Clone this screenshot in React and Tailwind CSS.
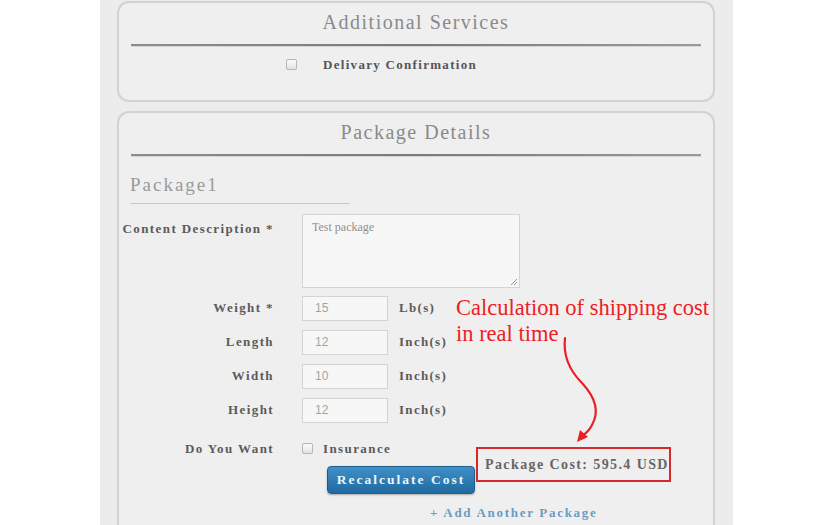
import React from "react";

const serif = { fontFamily: '"Liberation Serif", "DejaVu Serif", serif' };

function Divider() {
  return (
    <div className="mx-3 h-[2px] bg-gradient-to-r from-[#8d8d8d] via-[#7a7a7a] to-[#9a9a9a] shadow-[0_1px_0_#d6d6d6]" />
  );
}

function Card({ title, children, className = "" }) {
  return (
    <div
      className={`shrink-0 rounded-[12px] border-2 border-[#d2d2d2] bg-[#efefef] ${className}`}
    >
      <div className="flex h-[41px] items-center justify-center pb-[3px] text-[20px] tracking-[1.5px] text-[#8a8a8a]">
        {title}
      </div>
      <Divider />
      {children}
    </div>
  );
}

function Checkbox() {
  return (
    <span className="inline-block h-[11px] w-[11px] shrink-0 rounded-[2px] border border-[#b5b5b5] bg-gradient-to-b from-[#fbfbfb] to-[#e2e2e2]" />
  );
}

function NumberRow({ label, value, unit }) {
  return (
    <div className="flex h-[25px] items-center">
      <div className="w-[157px] pr-[2px] text-right text-[13px] font-bold tracking-[1.4px] text-[#5b5b5b]">
        {label}
      </div>
      <div
        className="ml-[26px] flex h-[25px] w-[86px] items-center border border-[#d4d4d4] bg-[#f7f7f7] pl-[12px] text-[12px] text-[#a3a3a3]"
        style={{ fontFamily: '"Liberation Sans", Arial, sans-serif' }}
      >
        {value}
      </div>
      <div className="ml-[11px] text-[13px] font-bold tracking-[1.3px] text-[#5b5b5b]">
        {unit}
      </div>
    </div>
  );
}

export default function App() {
  return (
    <div className="relative h-[525px] w-[825px] overflow-hidden bg-white" style={serif}>
      <div className="ml-[100px] flex h-full w-[633px] flex-col bg-[#ececec] pl-[17px] pr-[18px] pt-[1px]">
        <Card title="Additional Services" className="h-[101px]">
          <div className="mt-[9px] flex items-center pl-[167px]">
            <Checkbox />
            <span className="ml-[26px] text-[13px] font-bold tracking-[1.3px] text-[#555]">
              Delivary Confirmation
            </span>
          </div>
        </Card>

        <Card title="Package Details" className="mt-[9px] h-[430px]">
          <div className="ml-[11px] mt-[15px] w-[220px] border-b border-[#c9c9c9] pb-[3px] text-[19px] tracking-[2px] text-[#9a9a9a]">
            Package1
          </div>

          <div className="mt-[10px] flex items-start">
            <div className="w-[157px] pt-[5px] pr-[2px] text-right text-[13px] font-bold tracking-[1.4px] text-[#5b5b5b]">
              Content Description *
            </div>
            <div className="relative ml-[26px] h-[74px] w-[218px] border border-[#d4d4d4] bg-[#f7f7f7] px-[9px] pt-[3px] text-[12px] text-[#8f8f8f]">
              Test package
              <svg className="absolute bottom-[2px] right-[2px]" width="7" height="7" viewBox="0 0 7 7">
                <path d="M1 7 L7 1 M4 7 L7 4" stroke="#9a9a9a" strokeWidth="1" />
              </svg>
            </div>
          </div>

          <div className="mt-[8px] flex flex-col gap-[9px]">
            <NumberRow label="Weight *" value="15" unit="Lb(s)" />
            <NumberRow label="Length" value="12" unit="Inch(s)" />
            <NumberRow label="Width" value="10" unit="Inch(s)" />
            <NumberRow label="Height" value="12" unit="Inch(s)" />
          </div>

          <div className="mt-[16px] flex items-center">
            <div className="w-[157px] pr-[2px] text-right text-[13px] font-bold tracking-[1.4px] text-[#5b5b5b]">
              Do You Want
            </div>
            <div className="ml-[26px] flex items-center">
              <Checkbox />
              <span className="ml-[10px] text-[13px] font-bold tracking-[1.4px] text-[#5b5b5b]">
                Insurance
              </span>
            </div>
          </div>

          <div className="flex items-start">
            <button className="ml-[208px] mt-[8px] h-[28px] w-[148px] shrink-0 rounded-[4px] border border-[#1f5f8b] bg-gradient-to-b from-[#3f91c8] to-[#1f6a9f] text-[13.5px] font-bold tracking-[2px] text-[#eaf5ff] shadow-[0_1px_2px_rgba(0,0,0,0.3)]">
              Recalculate Cost
            </button>
            <div className="-mt-[11px] ml-[1px] flex h-[35px] w-[195px] shrink-0 items-center whitespace-nowrap border-2 border-[#d62a2a] pl-[7px] text-[14px] font-bold tracking-[1.4px] text-[#666]">
              Package Cost: 595.4 USD
            </div>
          </div>

          <div className="ml-[311px] mt-[9px] text-[13px] font-bold tracking-[1.7px] text-[#6b9cc3]">
            + Add Another Package
          </div>
        </Card>
      </div>

      {/* annotation over the form */}
      <div className="absolute left-[456px] top-[295px] text-[22.5px] leading-[26px] text-[#ee1c24]">
        <div>Calculation of shipping cost</div>
        <div>in real time</div>
      </div>
      <svg className="absolute left-0 top-0" width="825" height="525" viewBox="0 0 825 525">
        <path
          d="M565 338 C 563 355, 568 369, 582 383 C 595 397, 600 411, 592 425 C 589 431, 585 434, 582 436"
          fill="none"
          stroke="#ee1c24"
          strokeWidth="2.2"
          strokeLinecap="round"
        />
        <path d="M577 442 L580 430 L588 437 Z" fill="#ee1c24" />
      </svg>
    </div>
  );
}
